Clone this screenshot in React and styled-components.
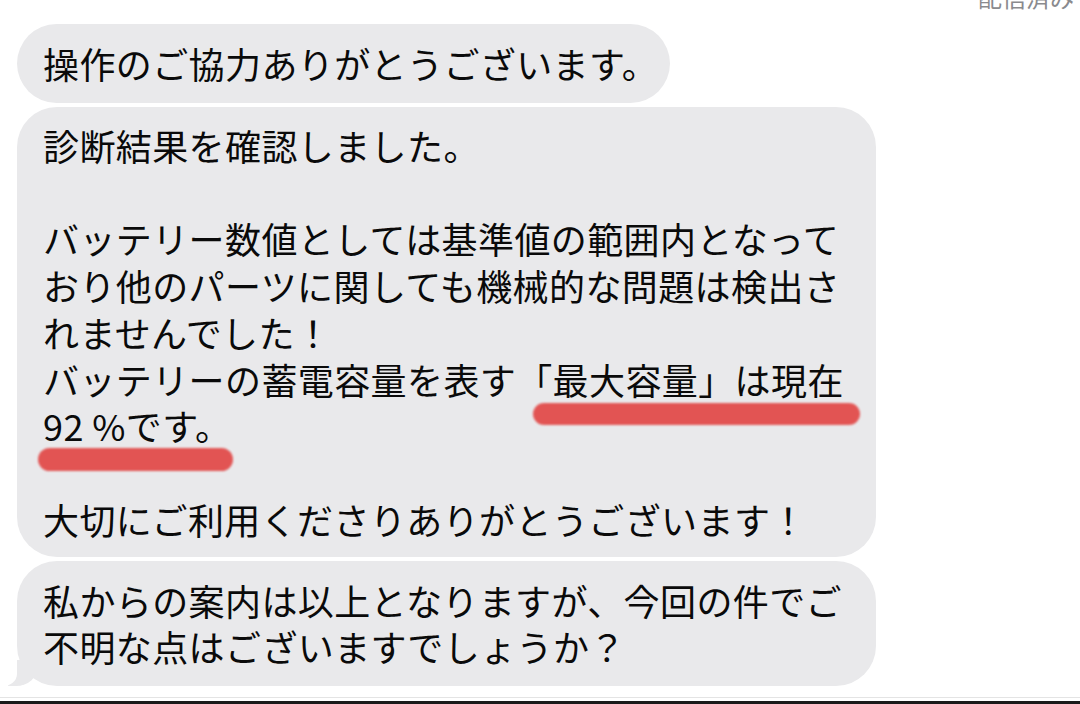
import React from "react";
import styled, { createGlobalStyle } from "styled-components";

const Global = createGlobalStyle`
  html, body { margin: 0; padding: 0; background: #ffffff; }
  body {
    width: 1080px;
    height: 704px;
    overflow: hidden;
    font-family: "Noto Sans CJK JP", "Noto Sans", sans-serif;
    color: #000;
  }
`;

const Screen = styled.div`
  width: 1080px;
  height: 704px;
  display: flex;
  flex-direction: column;
  background: #fff;
  overflow: hidden;
`;

const StatusRow = styled.div`
  display: flex;
  justify-content: flex-end;
  height: 24px;
  padding-right: 6px;
  overflow: hidden;
`;

const Delivered = styled.span`
  font-size: 24px;
  line-height: 24px;
  color: #8a8a8e;
  margin-top: -15px;
  white-space: nowrap;
`;

const Thread = styled.div`
  flex: 1;
  display: flex;
  flex-direction: column;
  align-items: flex-start;
  gap: 4px;
  padding-left: 17px;
`;

const Bubble = styled.div`
  position: relative;
  box-sizing: border-box;
  width: ${(p) => (p.$wide ? "859px" : "auto")};
  background: #e9e9eb;
  border-radius: 40px;
  padding: ${(p) => p.$pad || "16px 26px"};
  font-size: 36px;
  letter-spacing: 0.4px;
  line-height: 46.75px;
  white-space: nowrap;
  color: #0a0a0a;

  ${(p) =>
    p.$tail &&
    `
    &::before {
      content: "";
      position: absolute;
      left: -9px;
      bottom: 0;
      width: 30px;
      height: 26px;
      background: #e9e9eb;
      border-bottom-right-radius: 22px 20px;
    }
    &::after {
      content: "";
      position: absolute;
      left: -22px;
      bottom: 0;
      width: 22px;
      height: 28px;
      background: #fff;
      border-bottom-right-radius: 14px 12px;
    }
  `}
`;

const Line = styled.div`
  height: 46.75px;
`;

const Marker = styled.span`
  position: absolute;
  left: ${(p) => p.$left}px;
  top: ${(p) => p.$top}px;
  width: ${(p) => p.$width}px;
  height: ${(p) => p.$height}px;
  background: #e2504f;
  border-radius: 12px;
  filter: blur(1.2px);
  opacity: 0.97;
`;

const Footer = styled.div`
  height: 8px;
  display: flex;
  flex-direction: column;
  justify-content: flex-end;
`;

const Hairline = styled.div`
  height: 1px;
  background: #e4e4e4;
  margin-bottom: 3px;
`;

const DarkBar = styled.div`
  height: 3px;
  background: #1a1a1a;
`;

export default function App() {
  return (
    <Screen>
      <Global />
      <StatusRow>
        <Delivered>配信済み</Delivered>
      </StatusRow>
      <Thread>
        <Bubble $pad="16px 12px 16px 26px">操作のご協力ありがとうございます。</Bubble>
        <Bubble $wide $pad="15px 26px 14px">
          <Line>診断結果を確認しました。</Line>
          <Line />
          <Line>バッテリー数値としては基準値の範囲内となって</Line>
          <Line>おり他のパーツに関しても機械的な問題は検出さ</Line>
          <Line>れませんでした！</Line>
          <Line>バッテリーの蓄電容量を表す「最大容量」は現在</Line>
          <Line>92 %です。</Line>
          <Line />
          <Line>大切にご利用くださりありがとうございます！</Line>
          <Marker $left={516} $top={296} $width={327} $height={22} />
          <Marker $left={21} $top={341} $width={195} $height={23} />
        </Bubble>
        <Bubble $wide $tail>
          <Line>私からの案内は以上となりますが、今回の件でご</Line>
          <Line>不明な点はございますでしょうか？</Line>
        </Bubble>
      </Thread>
      <Footer>
        <Hairline />
        <DarkBar />
      </Footer>
    </Screen>
  );
}
